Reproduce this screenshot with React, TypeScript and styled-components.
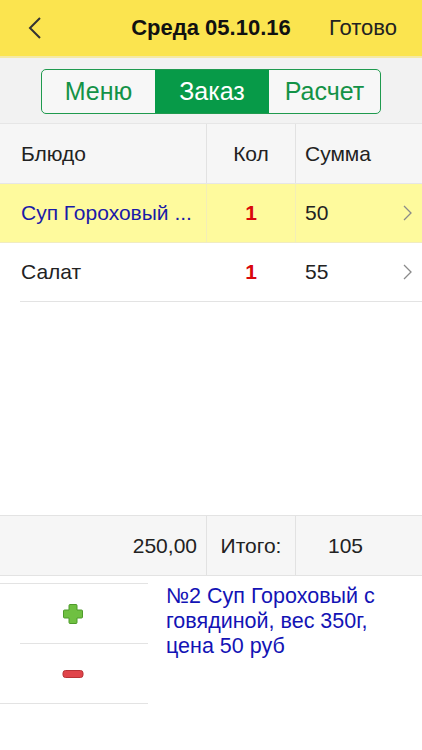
import React from "react";
import styled, { createGlobalStyle } from "styled-components";

const Global = createGlobalStyle`
  html, body { margin: 0; padding: 0; background: #fff; }
  body { font-family: "Liberation Sans", Arial, sans-serif; }
  * { box-sizing: border-box; }
`;

const Page = styled.div`
  width: 422px;
  height: 750px;
  display: flex;
  flex-direction: column;
  background: #fff;
  overflow: hidden;
`;

const TopBar = styled.div`
  height: 58px;
  background: #fbe44f;
  border-bottom: 2px solid #f4e9a6;
  display: grid;
  grid-template-columns: 1fr auto 1fr;
  align-items: center;
`;

const BackBtn = styled.div`
  padding-left: 28px;
  display: flex;
  align-items: center;
`;

const Title = styled.div`
  font-weight: bold;
  font-size: 22px;
  color: #111;
`;

const Done = styled.div`
  justify-self: end;
  padding-right: 25px;
  font-size: 22px;
  color: #222;
`;

const SegBand = styled.div`
  height: 65px;
  background: #f2f2f2;
  display: flex;
  justify-content: center;
  align-items: center;
  padding-top: 2px;
`;

const Segmented = styled.div`
  display: flex;
  width: 340px;
  height: 45px;
  border: 1px solid #1f9a4e;
  border-radius: 5px;
  overflow: hidden;
  background: #f7f7f7;
`;

const Seg = styled.div<{ $active?: boolean; $w: number }>`
  width: ${(p) => p.$w}px;
  display: flex;
  align-items: center;
  justify-content: center;
  font-size: 25px;
  color: ${(p) => (p.$active ? "#fff" : "#139247")};
  background: ${(p) => (p.$active ? "#079a48" : "transparent")};
`;

const Row = styled.div<{ $bg?: string; $line?: string }>`
  display: grid;
  grid-template-columns: 206px 89px 1fr;
  height: 59px;
  background: ${(p) => p.$bg || "#fff"};
  position: relative;
  border-bottom: 1px solid ${(p) => p.$line || "transparent"};
`;

const HeadRow = styled(Row)`
  height: 61px;
  border-top: 1px solid #e6e6e6;
`;

const Cell = styled.div<{ $align?: string; $divider?: string; $pl?: number; $pr?: number; $color?: string; $bold?: boolean }>`
  display: flex;
  align-items: center;
  justify-content: ${(p) => p.$align || "flex-start"};
  padding-left: ${(p) => p.$pl ?? 0}px;
  padding-right: ${(p) => p.$pr ?? 0}px;
  border-left: 1px solid ${(p) => p.$divider || "transparent"};
  font-size: 21px;
  color: ${(p) => p.$color || "#222"};
  font-weight: ${(p) => (p.$bold ? "bold" : "normal")};
  white-space: nowrap;
  overflow: hidden;
`;

const FirstCell = styled(Cell)`
  padding-left: 21px;
  border-left: none;
`;

const SumCell = styled(Cell)`
  justify-content: space-between;
  padding-right: 10px;
`;

const InsetLine = styled.div`
  position: absolute;
  left: 20px;
  right: 0;
  bottom: -1px;
  height: 1px;
  background: #e3e3e3;
`;

const Spacer = styled.div`
  flex: 1;
`;

const TotalRow = styled(Row)`
  height: 61px;
  border-top: 1px solid #e3e3e3;
  border-bottom: 1px solid #e3e3e3;
  background: #f6f6f6;
`;

const Bottom = styled.div`
  height: 174px;
  display: flex;
  padding-top: 7px;
`;

const Buttons = styled.div`
  width: 148px;
  display: flex;
  flex-direction: column;
  border-top: 1px solid #e3e3e3;
`;

const ActionBtn = styled.div<{ $inset?: boolean }>`
  height: 60px;
  display: flex;
  align-items: center;
  justify-content: center;
  padding-right: 2px;
  position: relative;
  &::after {
    content: "";
    position: absolute;
    left: ${(p) => (p.$inset ? "20px" : "0")};
    right: 0;
    bottom: 0;
    height: 1px;
    background: #e3e3e3;
  }
`;

const Desc = styled.div`
  flex: 1;
  padding: 1px 20px 0 18px;
  font-size: 21.5px;
  line-height: 25px;
  color: #1313b5;
`;

const Chevron = () => (
  <svg width="9" height="16" viewBox="0 0 9 16">
    <polyline points="1,1 8,8 1,15" fill="none" stroke="#8a8a8a" strokeWidth="1.3" />
  </svg>
);

const BackIcon = () => (
  <svg width="14" height="22" viewBox="0 0 14 22">
    <polyline points="12,1 2,11 12,21" fill="none" stroke="#333" strokeWidth="2" />
  </svg>
);

const PlusIcon = () => (
  <svg width="22" height="22" viewBox="0 0 22 22">
    <path
      d="M8 1.5h6a1 1 0 0 1 1 1V7h4.5a1 1 0 0 1 1 1v6a1 1 0 0 1-1 1H15v4.5a1 1 0 0 1-1 1H8a1 1 0 0 1-1-1V15H2.5a1 1 0 0 1-1-1V8a1 1 0 0 1 1-1H7V2.5a1 1 0 0 1 1-1z"
      fill="#6fc041"
      stroke="#4f9b2c"
      strokeWidth="1"
    />
  </svg>
);

const MinusIcon = () => (
  <svg width="22" height="10" viewBox="0 0 22 10">
    <rect x="1" y="1.5" width="20" height="7" rx="2.5" fill="#e0444a" stroke="#b83236" strokeWidth="1" />
  </svg>
);

const rows = [
  { name: "Суп Гороховый ...", qty: "1", sum: "50", selected: true },
  { name: "Салат", qty: "1", sum: "55", selected: false },
];

export default function App() {
  return (
    <Page>
      <Global />
      <TopBar>
        <BackBtn>
          <BackIcon />
        </BackBtn>
        <Title>Среда 05.10.16</Title>
        <Done>Готово</Done>
      </TopBar>
      <SegBand>
        <Segmented>
          <Seg $w={113}>Меню</Seg>
          <Seg $w={114} $active>
            Заказ
          </Seg>
          <Seg $w={111}>Расчет</Seg>
        </Segmented>
      </SegBand>
      <HeadRow $bg="#f6f6f6" $line="#e6e6e6">
        <FirstCell>Блюдо</FirstCell>
        <Cell $align="center" $divider="#e2e2e2">
          Кол
        </Cell>
        <Cell $pl={9} $divider="#e2e2e2">
          Сумма
        </Cell>
      </HeadRow>
      {rows.map((r) => (
        <Row key={r.name} $bg={r.selected ? "#fefa9d" : "#fff"} $line={r.selected ? "#f1ecc0" : "transparent"}>
          <FirstCell $color={r.selected ? "#1a1aa8" : "#222"}>{r.name}</FirstCell>
          <Cell $align="center" $divider={r.selected ? "#f3eeb6" : "transparent"} $color="#d9070c" $bold>
            {r.qty}
          </Cell>
          <SumCell $pl={9} $divider={r.selected ? "#f3eeb6" : "transparent"}>
            <span>{r.sum}</span>
            <Chevron />
          </SumCell>
          {!r.selected && <InsetLine />}
        </Row>
      ))}
      <Spacer />
      <TotalRow>
        <Cell $align="flex-end" $pr={9}>
          250,00
        </Cell>
        <Cell $align="center" $divider="#e2e2e2">
          Итого:
        </Cell>
        <Cell $pl={32} $divider="#e2e2e2">
          105
        </Cell>
      </TotalRow>
      <Bottom>
        <Buttons>
          <ActionBtn $inset>
            <PlusIcon />
          </ActionBtn>
          <ActionBtn>
            <MinusIcon />
          </ActionBtn>
        </Buttons>
        <Desc>№2 Суп Гороховый с говядиной, вес 350г, цена 50 руб</Desc>
      </Bottom>
    </Page>
  );
}
